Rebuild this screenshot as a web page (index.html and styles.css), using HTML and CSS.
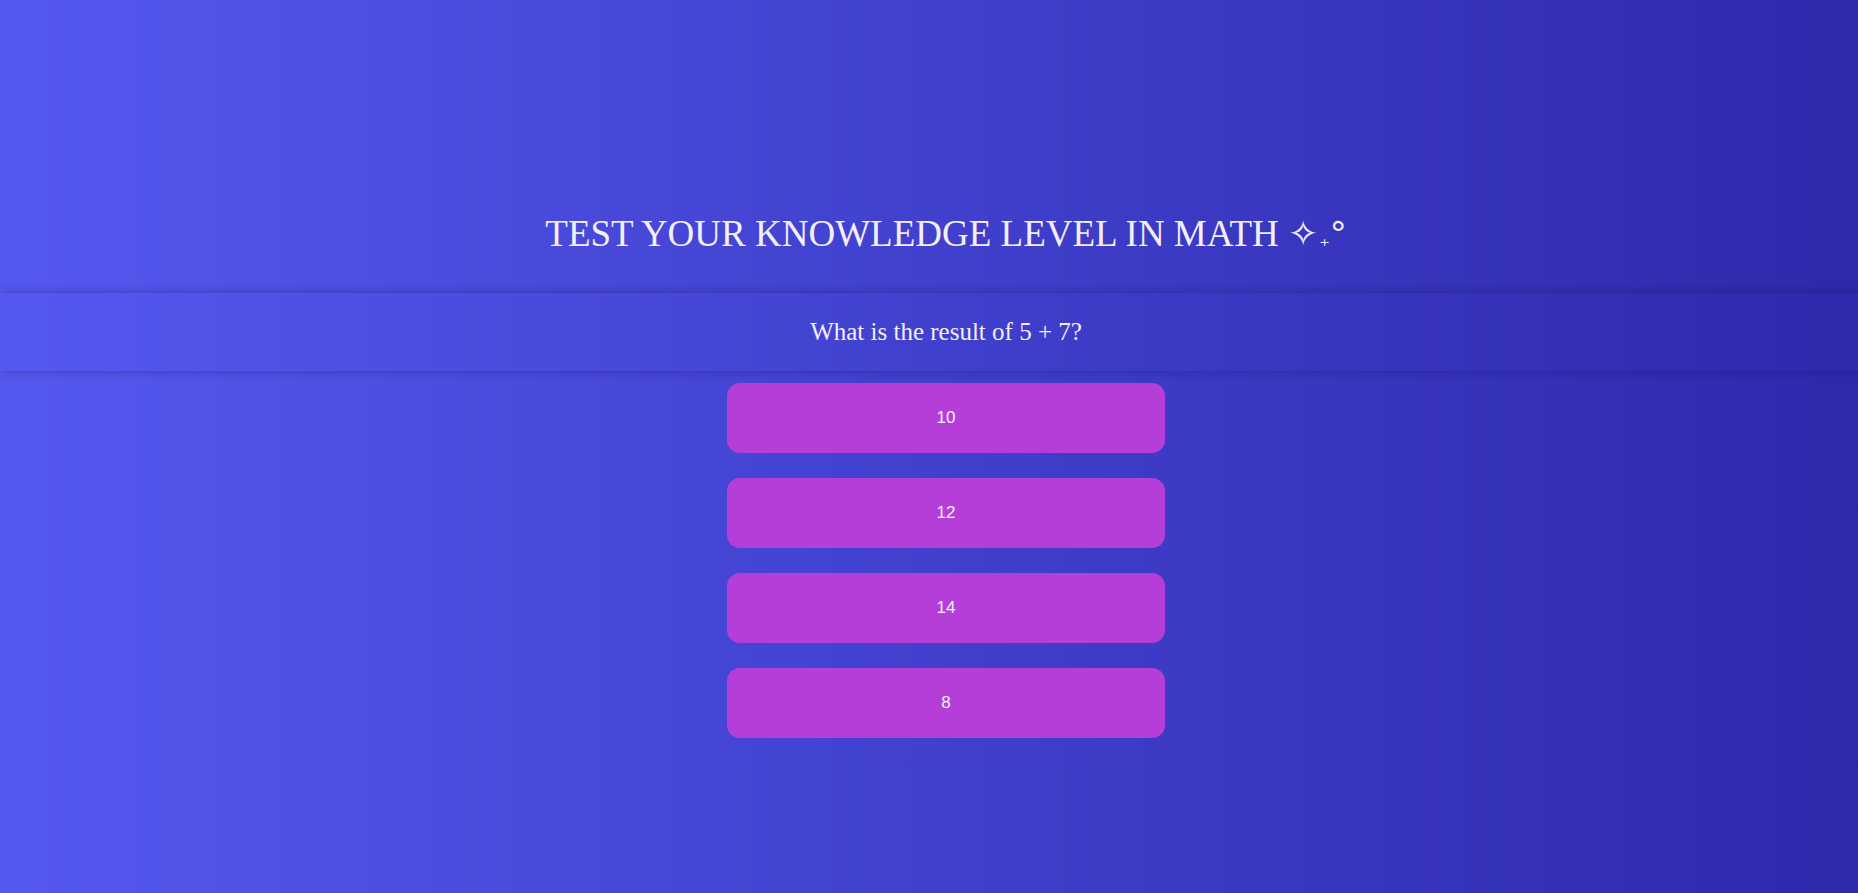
FILE: index.html
```html
<!DOCTYPE html>
<html lang="en">
<head>
<meta charset="utf-8">
<title>Math Quiz</title>
<link rel="stylesheet" href="styles.css">
</head>
<body>
<main class="quiz">
  <h1 class="quiz-title">TEST YOUR KNOWLEDGE LEVEL IN MATH <span class="deco"><span class="star">✧</span><span class="plus">₊</span><span class="ring">°</span></span></h1>
  <div class="question-bar">
    <p class="question">What is the result of 5 + 7?</p>
  </div>
  <div class="answers">
    <button class="answer">10</button>
    <button class="answer">12</button>
    <button class="answer">14</button>
    <button class="answer">8</button>
  </div>
</main>
</body>
</html>
```
FILE: styles.css
```css
html, body {
  margin: 0;
  padding: 0;
  height: 100%;
}
body {
  background: linear-gradient(90deg, #5558f0 0%, #2d29ab 100%);
  font-family: "Liberation Serif", "Times New Roman", serif;
  color: #f3eefc;
  overflow: hidden;
}
.quiz {
  display: flex;
  flex-direction: column;
  align-items: stretch;
  padding-top: 211px;
}
.quiz-title {
  margin: 0 0 36px;
  padding-left: 34px;
  font-size: 37px;
  font-weight: normal;
  line-height: 46px;
  height: 46px;
  text-align: center;
}
.deco {
  font-family: "DejaVu Sans", sans-serif;
  line-height: 0;
}
.star {
  font-size: 36px;
}
.plus {
  font-size: 20px;
  margin-left: 1px;
}
.ring {
  font-size: 34px;
}
.question-bar {
  height: 78px;
  box-shadow: 0 0 10px rgba(10, 5, 60, 0.3);
  display: flex;
  align-items: center;
  justify-content: center;
  padding-left: 34px;
}
.question {
  margin: 0;
  font-size: 25px;
  line-height: 28px;
}
.answers {
  display: flex;
  flex-direction: column;
  align-items: center;
  gap: 25px;
  margin-top: 12px;
  padding-left: 34px;
}
.answer {
  width: 438px;
  height: 70px;
  border: none;
  border-radius: 13px;
  background: #b53ed8;
  color: #f7f2ff;
  font-family: "Liberation Sans", Arial, sans-serif;
  font-size: 17px;
  cursor: pointer;
}
```
